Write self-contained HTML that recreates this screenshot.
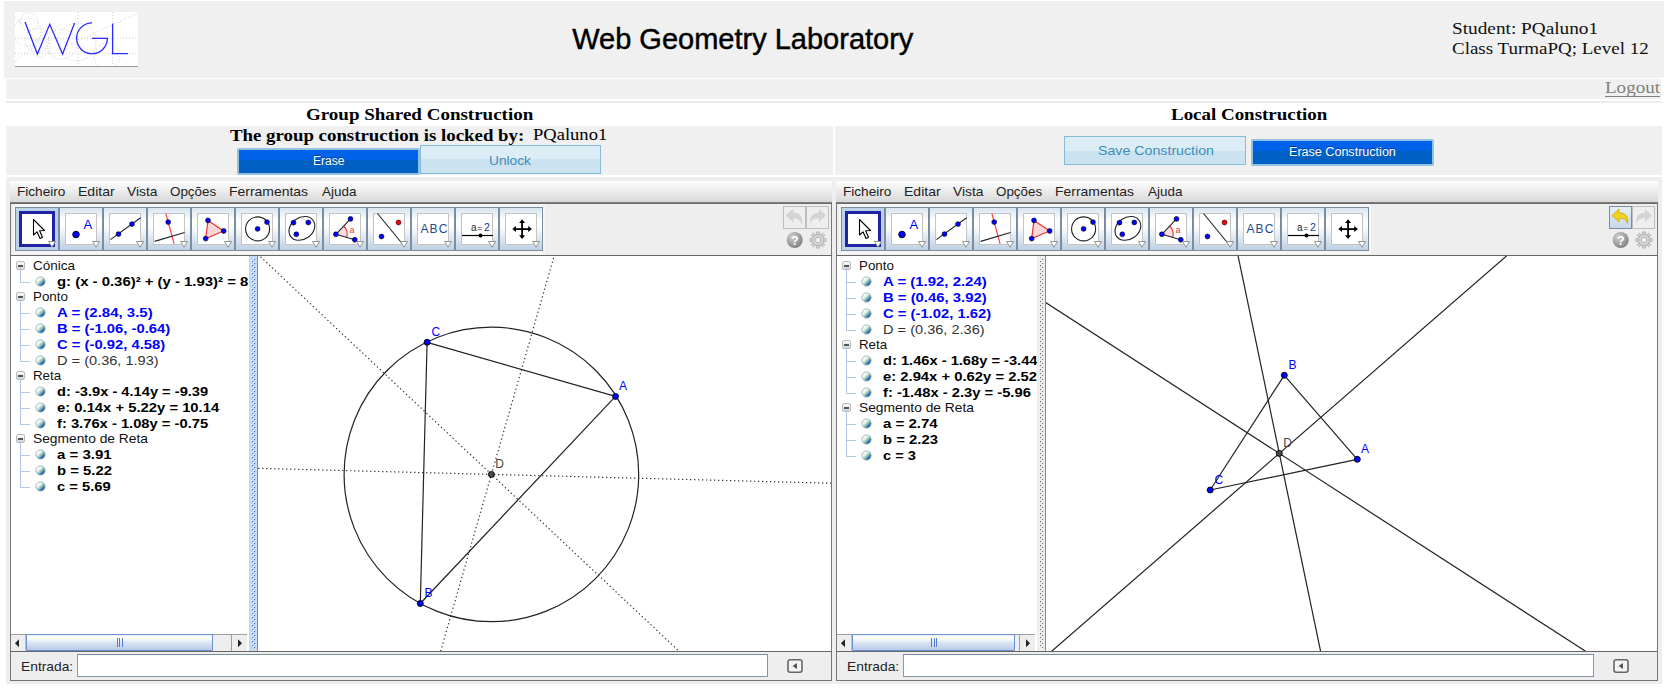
<!DOCTYPE html><html><head><meta charset="utf-8"><style>
html,body{margin:0;padding:0;}
body{width:1669px;height:693px;position:relative;overflow:hidden;background:#fff;}
.t{position:absolute;white-space:nowrap;line-height:0;}
.r{position:absolute;box-sizing:border-box;}
svg{position:absolute;overflow:hidden;}
</style></head><body>
<div class="r" style="left:4px;top:1px;width:1660px;height:77px;background:#f0f0f0"></div>
<svg style="left:15px;top:12px" width="123" height="55" viewBox="0 0 123 55">
<rect x="0" y="0" width="123" height="55" fill="#fff"/>
<g stroke="#777" stroke-width="0.6" fill="none" stroke-dasharray="0.8 2.2" opacity="0.75">
<circle cx="12" cy="20" r="14"/><circle cx="22" cy="28" r="12"/><circle cx="14" cy="10" r="9"/><circle cx="26" cy="36" r="9"/>
<circle cx="47" cy="32" r="15"/><circle cx="92" cy="44" r="13"/><circle cx="62" cy="30" r="19"/>
<line x1="0" y1="5" x2="40" y2="48"/><line x1="0" y1="50" x2="45" y2="12"/><line x1="56" y1="32" x2="123" y2="1"/>
<line x1="0" y1="26.3" x2="123" y2="26.3"/><line x1="0" y1="41.3" x2="123" y2="41.3"/>
<line x1="62.9" y1="0" x2="62.9" y2="55"/><line x1="97.6" y1="0" x2="97.6" y2="55"/>
</g>
<line x1="0" y1="54.5" x2="123" y2="54.5" stroke="#999" stroke-width="1"/>
<g stroke="#2a2aff" stroke-width="1.3" fill="none">
<polyline points="10,10.1 22.4,42 34.7,12.3 47.6,42 59.6,10.9"/>
<path d="M77,10.9 A15.4 15.4 0 1 0 92.4,26.3 L77,26.3"/>
<polyline points="97.6,11.6 97.6,41.6 112.9,41.6"/>
</g>
</svg>
<div class="t" style="left:572.20px;top:38.95px;font:29px/0 'Liberation Sans', sans-serif;color:#000;-webkit-text-stroke:0.45px #000;">Web Geometry Laboratory</div>
<div class="t" style="left:1452.20px;top:28.73px;font:16.5px/0 'Liberation Serif', serif;color:#111;transform:scaleX(1.1678);transform-origin:0 0;">Student: PQaluno1</div>
<div class="t" style="left:1452.20px;top:49.43px;font:16.5px/0 'Liberation Serif', serif;color:#111;transform:scaleX(1.1503);transform-origin:0 0;">Class TurmaPQ; Level 12</div>
<div class="r" style="left:6px;top:79px;width:1655px;height:20px;background:#f0f0f0"></div>
<div class="t" style="left:1605.00px;top:87.93px;font:16.5px/0 'Liberation Serif', serif;color:#808080;transform:scaleX(1.1530);transform-origin:0 0;">Logout</div>
<div class="r" style="left:1605px;top:96px;width:55px;height:1px;background:#808080"></div>
<div class="r" style="left:6px;top:101px;width:1656px;height:2px;background:#ececec"></div>
<div class="t" style="left:306.40px;top:114.60px;font:bold 16px/0 'Liberation Serif', serif;color:#000;transform:scaleX(1.1870);transform-origin:0 0;">Group Shared Construction</div>
<div class="t" style="left:1170.70px;top:114.60px;font:bold 16px/0 'Liberation Serif', serif;color:#000;transform:scaleX(1.1833);transform-origin:0 0;">Local Construction</div>
<div class="r" style="left:6px;top:126px;width:827px;height:49px;background:#f0f0f0"></div>
<div class="r" style="left:835px;top:126px;width:827px;height:49px;background:#f0f0f0"></div>
<div class="t" style="left:230.00px;top:135.60px;font:bold 16px/0 'Liberation Serif', serif;color:#000;transform:scaleX(1.1772);transform-origin:0 0;">The group construction is locked by:</div>
<div class="t" style="left:532.90px;top:135.43px;font:16.5px/0 'Liberation Serif', serif;color:#000;transform:scaleX(1.1242);transform-origin:0 0;">PQaluno1</div>
<div class="r" style="left:237px;top:148px;width:183px;height:27px;border:2px solid #93c2de;border-radius:2px;background:linear-gradient(#0062e8 0,#0062e8 42%,#0060c4 42%,#0060c4 100%);background-clip:padding-box"></div>
<div class="t" style="left:312.90px;top:161.04px;font:12px/0 'Liberation Sans', sans-serif;color:#fff;transform:scaleX(1.0032);transform-origin:0 0;text-shadow:0 -1px 0 rgba(0,0,0,.35);">Erase</div>
<div class="r" style="left:420px;top:145px;width:181px;height:29px;border:1px solid #86bcd8;background:linear-gradient(#ddedf6 0,#ddedf6 50%,#cbe3f0 50%,#cbe3f0 100%);background-clip:padding-box"></div>
<div class="t" style="left:489.30px;top:160.52px;font:13.5px/0 'Liberation Sans', sans-serif;color:#3f8cb8;transform:scaleX(1.0169);transform-origin:0 0;">Unlock</div>
<div class="r" style="left:1064px;top:136px;width:182px;height:29px;border:1px solid #86bcd8;background:linear-gradient(#ddedf6 0,#ddedf6 50%,#cbe3f0 50%,#cbe3f0 100%);background-clip:padding-box"></div>
<div class="t" style="left:1097.60px;top:151.32px;font:13.5px/0 'Liberation Sans', sans-serif;color:#3f8cb8;transform:scaleX(1.0517);transform-origin:0 0;">Save Construction</div>
<div class="r" style="left:1251px;top:139px;width:183px;height:27px;border:2px solid #93c2de;border-radius:2px;background:linear-gradient(#0062e8 0,#0062e8 42%,#0060c4 42%,#0060c4 100%);background-clip:padding-box"></div>
<div class="t" style="left:1288.60px;top:152.14px;font:12px/0 'Liberation Sans', sans-serif;color:#fff;transform:scaleX(1.0471);transform-origin:0 0;text-shadow:0 -1px 0 rgba(0,0,0,.35);">Erase Construction</div>
<div class="r" style="left:6px;top:177px;width:1656px;height:507px;background:#eeeeee"></div>
<div class="r" style="left:10px;top:181px;width:822px;height:21px;background:linear-gradient(#fefefe,#d8d8d8)"></div>
<div class="r" style="left:10px;top:202px;width:822px;height:2px;background:linear-gradient(#8a8a8a,#5e5e5e)"></div>
<div class="t" style="left:17.00px;top:191.90px;font:13px/0 'Liberation Sans', sans-serif;color:#222;transform:scaleX(1.0455);transform-origin:0 0;">Ficheiro</div>
<div class="t" style="left:78.30px;top:191.90px;font:13px/0 'Liberation Sans', sans-serif;color:#222;transform:scaleX(1.0794);transform-origin:0 0;">Editar</div>
<div class="t" style="left:126.90px;top:191.90px;font:13px/0 'Liberation Sans', sans-serif;color:#222;transform:scaleX(1.0627);transform-origin:0 0;">Vista</div>
<div class="t" style="left:170.30px;top:191.90px;font:13px/0 'Liberation Sans', sans-serif;color:#222;transform:scaleX(1.0290);transform-origin:0 0;">Opções</div>
<div class="t" style="left:229.30px;top:191.90px;font:13px/0 'Liberation Sans', sans-serif;color:#222;transform:scaleX(1.0719);transform-origin:0 0;">Ferramentas</div>
<div class="t" style="left:322.00px;top:191.90px;font:13px/0 'Liberation Sans', sans-serif;color:#222;transform:scaleX(1.0330);transform-origin:0 0;">Ajuda</div>
<div class="r" style="left:10px;top:204px;width:822px;height:52px;background:#eeeeee;border-left:1px solid #777;border-right:1px solid #777"></div>
<div class="r" style="left:13px;top:204px;width:532px;height:50px;background:#f6f6f6"></div>
<div class="r" style="left:10px;top:255px;width:822px;height:1px;background:#666"></div>
<div class="r" style="left:15px;top:207px;width:44px;height:44px;background:#bcd2e6;border:1px solid #7a8ea0"></div>
<div class="r" style="left:19px;top:211px;width:36px;height:36px;background:#fff;border:3px solid #2222a8"></div>
<svg style="left:21px;top:213px" width="32" height="32" viewBox="0 0 32 32"><path d="M12.5,6.5 L12.5,22 L16,18.8 L19,25.5 L21.5,24.3 L18.6,17.8 L23.5,17.5 Z" fill="#fff" stroke="#000" stroke-width="1.1" stroke-linejoin="round"/></svg>
<svg style="left:48px;top:241px" width="8" height="7" viewBox="0 0 8 7"><polygon points="0.5,0.5 7.5,0.5 4,6.2" fill="#fff" stroke="#888" stroke-width="0.9"/></svg>
<div class="r" style="left:59px;top:207px;width:44px;height:44px;background:linear-gradient(#d8e4ef 0%,#ffffff 30%,#ffffff 42%,#bdd0e2 100%);border:1px solid #7a8ea0"></div>
<div class="r" style="left:65px;top:213px;width:32px;height:32px;background:#fff;border:1px solid #c4c4c4"></div>
<svg style="left:66px;top:213px" width="32" height="32" viewBox="0 0 32 32"><circle cx="10" cy="21.5" r="3.3" fill="#0000ff" stroke="#000" stroke-width="0.9"/><text x="17.5" y="15.5" font-family="Liberation Sans" font-size="13" fill="#0000ff">A</text></svg>
<svg style="left:92px;top:241px" width="8" height="7" viewBox="0 0 8 7"><polygon points="0.5,0.5 7.5,0.5 4,6.2" fill="#fff" stroke="#888" stroke-width="0.9"/></svg>
<div class="r" style="left:103px;top:207px;width:44px;height:44px;background:linear-gradient(#d8e4ef 0%,#ffffff 30%,#ffffff 42%,#bdd0e2 100%);border:1px solid #7a8ea0"></div>
<div class="r" style="left:109px;top:213px;width:32px;height:32px;background:#fff;border:1px solid #c4c4c4"></div>
<svg style="left:110px;top:213px" width="32" height="32" viewBox="0 0 32 32"><line x1="0.4" y1="26.6" x2="30.6" y2="4.7" stroke="#222" stroke-width="1.1"/><circle cx="8.5" cy="21.1" r="2.45" fill="#0000ff" stroke="#000" stroke-width="0.6"/><circle cx="22" cy="11.1" r="2.45" fill="#0000ff" stroke="#000" stroke-width="0.6"/></svg>
<svg style="left:136px;top:241px" width="8" height="7" viewBox="0 0 8 7"><polygon points="0.5,0.5 7.5,0.5 4,6.2" fill="#fff" stroke="#888" stroke-width="0.9"/></svg>
<div class="r" style="left:147px;top:207px;width:44px;height:44px;background:linear-gradient(#d8e4ef 0%,#ffffff 30%,#ffffff 42%,#bdd0e2 100%);border:1px solid #7a8ea0"></div>
<div class="r" style="left:153px;top:213px;width:32px;height:32px;background:#fff;border:1px solid #c4c4c4"></div>
<svg style="left:154px;top:213px" width="32" height="32" viewBox="0 0 32 32"><line x1="11.8" y1="0.4" x2="20.1" y2="30.9" stroke="#f33" stroke-width="1.1"/><line x1="0.6" y1="28.4" x2="30.6" y2="19.5" stroke="#222" stroke-width="1.1"/><circle cx="14.2" cy="9.1" r="2.45" fill="#0000ff" stroke="#000" stroke-width="0.6"/></svg>
<svg style="left:180px;top:241px" width="8" height="7" viewBox="0 0 8 7"><polygon points="0.5,0.5 7.5,0.5 4,6.2" fill="#fff" stroke="#888" stroke-width="0.9"/></svg>
<div class="r" style="left:191px;top:207px;width:44px;height:44px;background:linear-gradient(#d8e4ef 0%,#ffffff 30%,#ffffff 42%,#bdd0e2 100%);border:1px solid #7a8ea0"></div>
<div class="r" style="left:197px;top:213px;width:32px;height:32px;background:#fff;border:1px solid #c4c4c4"></div>
<svg style="left:198px;top:213px" width="32" height="32" viewBox="0 0 32 32"><polygon points="10,7.4 25.7,18 7.7,25.6" fill="#f6d6d6" stroke="#e33" stroke-width="1.2"/><circle cx="10" cy="7.4" r="2.45" fill="#0000ff" stroke="#000" stroke-width="0.6"/><circle cx="25.7" cy="18" r="2.45" fill="#0000ff" stroke="#000" stroke-width="0.6"/><circle cx="7.7" cy="25.6" r="2.45" fill="#0000ff" stroke="#000" stroke-width="0.6"/></svg>
<svg style="left:224px;top:241px" width="8" height="7" viewBox="0 0 8 7"><polygon points="0.5,0.5 7.5,0.5 4,6.2" fill="#fff" stroke="#888" stroke-width="0.9"/></svg>
<div class="r" style="left:235px;top:207px;width:44px;height:44px;background:linear-gradient(#d8e4ef 0%,#ffffff 30%,#ffffff 42%,#bdd0e2 100%);border:1px solid #7a8ea0"></div>
<div class="r" style="left:241px;top:213px;width:32px;height:32px;background:#fff;border:1px solid #c4c4c4"></div>
<svg style="left:242px;top:213px" width="32" height="32" viewBox="0 0 32 32"><circle cx="15.6" cy="15.9" r="12" fill="none" stroke="#222" stroke-width="1.1"/><circle cx="15.6" cy="15.9" r="2.45" fill="#0000ff" stroke="#000" stroke-width="0.6"/><circle cx="25" cy="9.1" r="2.45" fill="#0000ff" stroke="#000" stroke-width="0.6"/></svg>
<svg style="left:268px;top:241px" width="8" height="7" viewBox="0 0 8 7"><polygon points="0.5,0.5 7.5,0.5 4,6.2" fill="#fff" stroke="#888" stroke-width="0.9"/></svg>
<div class="r" style="left:279px;top:207px;width:44px;height:44px;background:linear-gradient(#d8e4ef 0%,#ffffff 30%,#ffffff 42%,#bdd0e2 100%);border:1px solid #7a8ea0"></div>
<div class="r" style="left:285px;top:213px;width:32px;height:32px;background:#fff;border:1px solid #c4c4c4"></div>
<svg style="left:286px;top:213px" width="32" height="32" viewBox="0 0 32 32"><ellipse cx="15.9" cy="15.4" rx="13.8" ry="10.8" transform="rotate(-35 15.9 15.4)" fill="none" stroke="#222" stroke-width="1.1"/><circle cx="7.5" cy="9.7" r="2.45" fill="#0000ff" stroke="#000" stroke-width="0.6"/><circle cx="22.3" cy="9.5" r="2.45" fill="#0000ff" stroke="#000" stroke-width="0.6"/><circle cx="10.3" cy="21.3" r="2.45" fill="#0000ff" stroke="#000" stroke-width="0.6"/></svg>
<svg style="left:312px;top:241px" width="8" height="7" viewBox="0 0 8 7"><polygon points="0.5,0.5 7.5,0.5 4,6.2" fill="#fff" stroke="#888" stroke-width="0.9"/></svg>
<div class="r" style="left:323px;top:207px;width:44px;height:44px;background:linear-gradient(#d8e4ef 0%,#ffffff 30%,#ffffff 42%,#bdd0e2 100%);border:1px solid #7a8ea0"></div>
<div class="r" style="left:329px;top:213px;width:32px;height:32px;background:#fff;border:1px solid #c4c4c4"></div>
<svg style="left:330px;top:213px" width="32" height="32" viewBox="0 0 32 32"><path d="M5.9,21.3 L14,13.5 A11,11 0 0 1 16.8,24.2 Z" fill="#f8dede"/><path d="M14,13.5 A11,11 0 0 1 16.8,24.2" fill="none" stroke="#e33" stroke-width="1.1"/><line x1="5.9" y1="21.3" x2="20.5" y2="5.9" stroke="#222" stroke-width="1.1"/><line x1="5.9" y1="21.3" x2="24.8" y2="26.8" stroke="#222" stroke-width="1.1"/><text x="19.5" y="19.5" font-family="Liberation Sans" font-size="9" fill="#e33">a</text><circle cx="5.9" cy="21.3" r="2.45" fill="#0000ff" stroke="#000" stroke-width="0.6"/><circle cx="20.5" cy="5.9" r="2.45" fill="#0000ff" stroke="#000" stroke-width="0.6"/><circle cx="24.8" cy="26.8" r="2.45" fill="#0000ff" stroke="#000" stroke-width="0.6"/></svg>
<svg style="left:356px;top:241px" width="8" height="7" viewBox="0 0 8 7"><polygon points="0.5,0.5 7.5,0.5 4,6.2" fill="#fff" stroke="#888" stroke-width="0.9"/></svg>
<div class="r" style="left:367px;top:207px;width:44px;height:44px;background:linear-gradient(#d8e4ef 0%,#ffffff 30%,#ffffff 42%,#bdd0e2 100%);border:1px solid #7a8ea0"></div>
<div class="r" style="left:373px;top:213px;width:32px;height:32px;background:#fff;border:1px solid #c4c4c4"></div>
<svg style="left:374px;top:213px" width="32" height="32" viewBox="0 0 32 32"><line x1="3.5" y1="0.5" x2="28.5" y2="31" stroke="#222" stroke-width="1.1"/><circle cx="7.5" cy="23.5" r="2.45" fill="#0000ff" stroke="#000" stroke-width="0.6"/><circle cx="24.5" cy="9.5" r="2.45" fill="#ff0000" stroke="#000" stroke-width="0.6"/></svg>
<svg style="left:400px;top:241px" width="8" height="7" viewBox="0 0 8 7"><polygon points="0.5,0.5 7.5,0.5 4,6.2" fill="#fff" stroke="#888" stroke-width="0.9"/></svg>
<div class="r" style="left:411px;top:207px;width:44px;height:44px;background:linear-gradient(#d8e4ef 0%,#ffffff 30%,#ffffff 42%,#bdd0e2 100%);border:1px solid #7a8ea0"></div>
<div class="r" style="left:417px;top:213px;width:32px;height:32px;background:#fff;border:1px solid #c4c4c4"></div>
<svg style="left:418px;top:213px" width="32" height="32" viewBox="0 0 32 32"><text x="2.5" y="20" font-family="Liberation Sans" font-size="12" fill="#1c4a8c" letter-spacing="1.1">ABC</text></svg>
<svg style="left:444px;top:241px" width="8" height="7" viewBox="0 0 8 7"><polygon points="0.5,0.5 7.5,0.5 4,6.2" fill="#fff" stroke="#888" stroke-width="0.9"/></svg>
<div class="r" style="left:455px;top:207px;width:44px;height:44px;background:linear-gradient(#d8e4ef 0%,#ffffff 30%,#ffffff 42%,#bdd0e2 100%);border:1px solid #7a8ea0"></div>
<div class="r" style="left:461px;top:213px;width:32px;height:32px;background:#fff;border:1px solid #c4c4c4"></div>
<svg style="left:462px;top:213px" width="32" height="32" viewBox="0 0 32 32"><text x="9" y="18" font-family="Liberation Sans" font-size="10" fill="#222">a</text><text x="15.5" y="17.5" font-family="Liberation Sans" font-size="8" fill="#222">=</text><text x="22" y="18" font-family="Liberation Sans" font-size="10.5" fill="#0a3a9a">2</text><line x1="0" y1="22.5" x2="31" y2="22.5" stroke="#000" stroke-width="1.2"/><circle cx="18.5" cy="22.5" r="2" fill="#000"/></svg>
<svg style="left:488px;top:241px" width="8" height="7" viewBox="0 0 8 7"><polygon points="0.5,0.5 7.5,0.5 4,6.2" fill="#fff" stroke="#888" stroke-width="0.9"/></svg>
<div class="r" style="left:499px;top:207px;width:44px;height:44px;background:linear-gradient(#d8e4ef 0%,#ffffff 30%,#ffffff 42%,#bdd0e2 100%);border:1px solid #7a8ea0"></div>
<div class="r" style="left:505px;top:213px;width:32px;height:32px;background:#fff;border:1px solid #c4c4c4"></div>
<svg style="left:506px;top:213px" width="32" height="32" viewBox="0 0 32 32"><g fill="#000"><rect x="15.2" y="9" width="1.8" height="14"/><rect x="9" y="15.2" width="14" height="1.8"/><polygon points="16.1,6.3 13.1,10 19.1,10"/><polygon points="16.1,25.9 13.1,22.2 19.1,22.2"/><polygon points="6.3,16.1 10,13.1 10,19.1"/><polygon points="25.9,16.1 22.2,13.1 22.2,19.1"/></g></svg>
<svg style="left:532px;top:241px" width="8" height="7" viewBox="0 0 8 7"><polygon points="0.5,0.5 7.5,0.5 4,6.2" fill="#fff" stroke="#888" stroke-width="0.9"/></svg>
<div class="r" style="left:783px;top:206px;width:23px;height:23px;border:1px solid #bdbdbd"></div>
<div class="r" style="left:806px;top:206px;width:23px;height:23px;border:1px solid #bdbdbd"></div>
<svg style="left:783px;top:206px" width="23" height="23" viewBox="0 0 23 23"><path d="M3,9.5 L10,3 L10,6.8 C16,6.8 19.5,10 18.5,17.5 C17,13 14.5,12.2 10,12.2 L10,16 Z" fill="#d4d4d4" stroke="#d4d4d4" stroke-width="0.7"/></svg>
<svg style="left:806px;top:206px" width="23" height="23" viewBox="0 0 23 23"><path d="M20,9.5 L13,3 L13,6.8 C7,6.8 3.5,10 4.5,17.5 C6,13 8.5,12.2 13,12.2 L13,16 Z" fill="#d4d4d4"/></svg>
<svg style="left:786px;top:231px" width="18" height="18" viewBox="0 0 18 18"><defs><radialGradient id="hg10" cx="0.35" cy="0.3" r="0.8"><stop offset="0" stop-color="#d0d0d0"/><stop offset="1" stop-color="#7a7a7a"/></radialGradient></defs><circle cx="8.7" cy="9" r="8" fill="url(#hg10)"/><text x="8.7" y="13.5" text-anchor="middle" font-family="Liberation Sans" font-weight="bold" font-size="12.5" fill="#fff">?</text></svg>
<svg style="left:809px;top:231px" width="18" height="18" viewBox="0 0 18 18"><rect x="7.4" y="0.8" width="3.2" height="4.2" rx="0.6" fill="#d2d2d2" stroke="#a4a4a4" stroke-width="0.6" transform="rotate(0 9 9)"/><rect x="7.4" y="0.8" width="3.2" height="4.2" rx="0.6" fill="#d2d2d2" stroke="#a4a4a4" stroke-width="0.6" transform="rotate(45 9 9)"/><rect x="7.4" y="0.8" width="3.2" height="4.2" rx="0.6" fill="#d2d2d2" stroke="#a4a4a4" stroke-width="0.6" transform="rotate(90 9 9)"/><rect x="7.4" y="0.8" width="3.2" height="4.2" rx="0.6" fill="#d2d2d2" stroke="#a4a4a4" stroke-width="0.6" transform="rotate(135 9 9)"/><rect x="7.4" y="0.8" width="3.2" height="4.2" rx="0.6" fill="#d2d2d2" stroke="#a4a4a4" stroke-width="0.6" transform="rotate(180 9 9)"/><rect x="7.4" y="0.8" width="3.2" height="4.2" rx="0.6" fill="#d2d2d2" stroke="#a4a4a4" stroke-width="0.6" transform="rotate(225 9 9)"/><rect x="7.4" y="0.8" width="3.2" height="4.2" rx="0.6" fill="#d2d2d2" stroke="#a4a4a4" stroke-width="0.6" transform="rotate(270 9 9)"/><rect x="7.4" y="0.8" width="3.2" height="4.2" rx="0.6" fill="#d2d2d2" stroke="#a4a4a4" stroke-width="0.6" transform="rotate(315 9 9)"/><circle cx="9" cy="9" r="5.8" fill="#d2d2d2" stroke="#a4a4a4" stroke-width="0.6"/><rect x="6.5" y="0.5" width="5" height="17" fill="none"/><circle cx="9" cy="9" r="2.6" fill="#f2f2f2" stroke="#a0a0a0" stroke-width="0.6"/></svg>
<div class="r" style="left:10px;top:256px;width:822px;height:395px;background:#fff;border-left:1px solid #777;border-right:1px solid #777"></div>
<div class="r" style="left:16px;top:261.0px;width:9px;height:9px;border:1px solid #bbb;border-radius:2px;background:linear-gradient(#fafafa,#d6d6d6)"></div>
<div class="r" style="left:18px;top:265.0px;width:5px;height:1.6px;background:#555"></div>
<div class="t" style="left:33.20px;top:265.80px;font:13px/0 'Liberation Sans', sans-serif;color:#111;transform:scaleX(1.0376);transform-origin:0 0;">Cónica</div>
<div class="r" style="left:20px;top:268px;width:1px;height:13.5px;background:#b0c8e4"></div>
<div class="r" style="left:20px;top:281.5px;width:10px;height:1px;background:#b0c8e4"></div>
<svg style="left:35px;top:276.0px" width="11" height="11" viewBox="0 0 11 11"><defs><linearGradient id="bl" x1="0.15" y1="0.15" x2="0.85" y2="0.85"><stop offset="0" stop-color="#ffffff"/><stop offset="0.3" stop-color="#f0f6ee"/><stop offset="0.5" stop-color="#b6d4b4"/><stop offset="0.72" stop-color="#4d93c4"/><stop offset="1" stop-color="#1c3e78"/></linearGradient></defs><circle cx="5.5" cy="5.5" r="4.6" fill="url(#bl)" stroke="#7fa8b8" stroke-width="0.8"/></svg>
<div class="t" style="left:57.30px;top:282.20px;font:bold 13px/0 'Liberation Sans', sans-serif;color:#000;transform:scaleX(1.1461);transform-origin:0 0;">g: (x - 0.36)² + (y - 1.93)² = 8</div>
<div class="r" style="left:16px;top:292.0px;width:9px;height:9px;border:1px solid #bbb;border-radius:2px;background:linear-gradient(#fafafa,#d6d6d6)"></div>
<div class="r" style="left:18px;top:296.0px;width:5px;height:1.6px;background:#555"></div>
<div class="t" style="left:33.20px;top:296.80px;font:13px/0 'Liberation Sans', sans-serif;color:#111;transform:scaleX(1.0289);transform-origin:0 0;">Ponto</div>
<div class="r" style="left:20px;top:299px;width:1px;height:19px;background:#b0c8e4"></div>
<div class="r" style="left:20px;top:312.5px;width:10px;height:1px;background:#b0c8e4"></div>
<svg style="left:35px;top:307.0px" width="11" height="11" viewBox="0 0 11 11"><defs><linearGradient id="bl" x1="0.15" y1="0.15" x2="0.85" y2="0.85"><stop offset="0" stop-color="#ffffff"/><stop offset="0.3" stop-color="#f0f6ee"/><stop offset="0.5" stop-color="#b6d4b4"/><stop offset="0.72" stop-color="#4d93c4"/><stop offset="1" stop-color="#1c3e78"/></linearGradient></defs><circle cx="5.5" cy="5.5" r="4.6" fill="url(#bl)" stroke="#7fa8b8" stroke-width="0.8"/></svg>
<div class="t" style="left:57.30px;top:313.20px;font:bold 13px/0 'Liberation Sans', sans-serif;color:#0000ff;transform:scaleX(1.1524);transform-origin:0 0;">A = (2.84, 3.5)</div>
<div class="r" style="left:20px;top:315px;width:1px;height:19px;background:#b0c8e4"></div>
<div class="r" style="left:20px;top:328.5px;width:10px;height:1px;background:#b0c8e4"></div>
<svg style="left:35px;top:323.0px" width="11" height="11" viewBox="0 0 11 11"><defs><linearGradient id="bl" x1="0.15" y1="0.15" x2="0.85" y2="0.85"><stop offset="0" stop-color="#ffffff"/><stop offset="0.3" stop-color="#f0f6ee"/><stop offset="0.5" stop-color="#b6d4b4"/><stop offset="0.72" stop-color="#4d93c4"/><stop offset="1" stop-color="#1c3e78"/></linearGradient></defs><circle cx="5.5" cy="5.5" r="4.6" fill="url(#bl)" stroke="#7fa8b8" stroke-width="0.8"/></svg>
<div class="t" style="left:57.30px;top:329.20px;font:bold 13px/0 'Liberation Sans', sans-serif;color:#0000ff;transform:scaleX(1.1394);transform-origin:0 0;">B = (-1.06, -0.64)</div>
<div class="r" style="left:20px;top:331px;width:1px;height:19px;background:#b0c8e4"></div>
<div class="r" style="left:20px;top:344.5px;width:10px;height:1px;background:#b0c8e4"></div>
<svg style="left:35px;top:339.0px" width="11" height="11" viewBox="0 0 11 11"><defs><linearGradient id="bl" x1="0.15" y1="0.15" x2="0.85" y2="0.85"><stop offset="0" stop-color="#ffffff"/><stop offset="0.3" stop-color="#f0f6ee"/><stop offset="0.5" stop-color="#b6d4b4"/><stop offset="0.72" stop-color="#4d93c4"/><stop offset="1" stop-color="#1c3e78"/></linearGradient></defs><circle cx="5.5" cy="5.5" r="4.6" fill="url(#bl)" stroke="#7fa8b8" stroke-width="0.8"/></svg>
<div class="t" style="left:57.30px;top:345.20px;font:bold 13px/0 'Liberation Sans', sans-serif;color:#0000ff;transform:scaleX(1.1379);transform-origin:0 0;">C = (-0.92, 4.58)</div>
<div class="r" style="left:20px;top:347px;width:1px;height:13.5px;background:#b0c8e4"></div>
<div class="r" style="left:20px;top:360.5px;width:10px;height:1px;background:#b0c8e4"></div>
<svg style="left:35px;top:355.0px" width="11" height="11" viewBox="0 0 11 11"><defs><linearGradient id="bl" x1="0.15" y1="0.15" x2="0.85" y2="0.85"><stop offset="0" stop-color="#ffffff"/><stop offset="0.3" stop-color="#f0f6ee"/><stop offset="0.5" stop-color="#b6d4b4"/><stop offset="0.72" stop-color="#4d93c4"/><stop offset="1" stop-color="#1c3e78"/></linearGradient></defs><circle cx="5.5" cy="5.5" r="4.6" fill="url(#bl)" stroke="#7fa8b8" stroke-width="0.8"/></svg>
<div class="t" style="left:57.30px;top:361.20px;font:13px/0 'Liberation Sans', sans-serif;color:#333;transform:scaleX(1.1210);transform-origin:0 0;">D = (0.36, 1.93)</div>
<div class="r" style="left:16px;top:371.0px;width:9px;height:9px;border:1px solid #bbb;border-radius:2px;background:linear-gradient(#fafafa,#d6d6d6)"></div>
<div class="r" style="left:18px;top:375.0px;width:5px;height:1.6px;background:#555"></div>
<div class="t" style="left:33.20px;top:375.80px;font:13px/0 'Liberation Sans', sans-serif;color:#111;transform:scaleX(1.0237);transform-origin:0 0;">Reta</div>
<div class="r" style="left:20px;top:378px;width:1px;height:19px;background:#b0c8e4"></div>
<div class="r" style="left:20px;top:391.5px;width:10px;height:1px;background:#b0c8e4"></div>
<svg style="left:35px;top:386.0px" width="11" height="11" viewBox="0 0 11 11"><defs><linearGradient id="bl" x1="0.15" y1="0.15" x2="0.85" y2="0.85"><stop offset="0" stop-color="#ffffff"/><stop offset="0.3" stop-color="#f0f6ee"/><stop offset="0.5" stop-color="#b6d4b4"/><stop offset="0.72" stop-color="#4d93c4"/><stop offset="1" stop-color="#1c3e78"/></linearGradient></defs><circle cx="5.5" cy="5.5" r="4.6" fill="url(#bl)" stroke="#7fa8b8" stroke-width="0.8"/></svg>
<div class="t" style="left:57.30px;top:392.20px;font:bold 13px/0 'Liberation Sans', sans-serif;color:#000;transform:scaleX(1.1277);transform-origin:0 0;">d: -3.9x - 4.14y = -9.39</div>
<div class="r" style="left:20px;top:394px;width:1px;height:19px;background:#b0c8e4"></div>
<div class="r" style="left:20px;top:407.5px;width:10px;height:1px;background:#b0c8e4"></div>
<svg style="left:35px;top:402.0px" width="11" height="11" viewBox="0 0 11 11"><defs><linearGradient id="bl" x1="0.15" y1="0.15" x2="0.85" y2="0.85"><stop offset="0" stop-color="#ffffff"/><stop offset="0.3" stop-color="#f0f6ee"/><stop offset="0.5" stop-color="#b6d4b4"/><stop offset="0.72" stop-color="#4d93c4"/><stop offset="1" stop-color="#1c3e78"/></linearGradient></defs><circle cx="5.5" cy="5.5" r="4.6" fill="url(#bl)" stroke="#7fa8b8" stroke-width="0.8"/></svg>
<div class="t" style="left:57.30px;top:408.20px;font:bold 13px/0 'Liberation Sans', sans-serif;color:#000;transform:scaleX(1.1390);transform-origin:0 0;">e: 0.14x + 5.22y = 10.14</div>
<div class="r" style="left:20px;top:410px;width:1px;height:13.5px;background:#b0c8e4"></div>
<div class="r" style="left:20px;top:423.5px;width:10px;height:1px;background:#b0c8e4"></div>
<svg style="left:35px;top:418.0px" width="11" height="11" viewBox="0 0 11 11"><defs><linearGradient id="bl" x1="0.15" y1="0.15" x2="0.85" y2="0.85"><stop offset="0" stop-color="#ffffff"/><stop offset="0.3" stop-color="#f0f6ee"/><stop offset="0.5" stop-color="#b6d4b4"/><stop offset="0.72" stop-color="#4d93c4"/><stop offset="1" stop-color="#1c3e78"/></linearGradient></defs><circle cx="5.5" cy="5.5" r="4.6" fill="url(#bl)" stroke="#7fa8b8" stroke-width="0.8"/></svg>
<div class="t" style="left:57.30px;top:424.20px;font:bold 13px/0 'Liberation Sans', sans-serif;color:#000;transform:scaleX(1.1336);transform-origin:0 0;">f: 3.76x - 1.08y = -0.75</div>
<div class="r" style="left:16px;top:434.0px;width:9px;height:9px;border:1px solid #bbb;border-radius:2px;background:linear-gradient(#fafafa,#d6d6d6)"></div>
<div class="r" style="left:18px;top:438.0px;width:5px;height:1.6px;background:#555"></div>
<div class="t" style="left:33.20px;top:438.80px;font:13px/0 'Liberation Sans', sans-serif;color:#111;transform:scaleX(1.0608);transform-origin:0 0;">Segmento de Reta</div>
<div class="r" style="left:20px;top:441px;width:1px;height:19px;background:#b0c8e4"></div>
<div class="r" style="left:20px;top:454.5px;width:10px;height:1px;background:#b0c8e4"></div>
<svg style="left:35px;top:449.0px" width="11" height="11" viewBox="0 0 11 11"><defs><linearGradient id="bl" x1="0.15" y1="0.15" x2="0.85" y2="0.85"><stop offset="0" stop-color="#ffffff"/><stop offset="0.3" stop-color="#f0f6ee"/><stop offset="0.5" stop-color="#b6d4b4"/><stop offset="0.72" stop-color="#4d93c4"/><stop offset="1" stop-color="#1c3e78"/></linearGradient></defs><circle cx="5.5" cy="5.5" r="4.6" fill="url(#bl)" stroke="#7fa8b8" stroke-width="0.8"/></svg>
<div class="t" style="left:57.30px;top:455.20px;font:bold 13px/0 'Liberation Sans', sans-serif;color:#000;transform:scaleX(1.1540);transform-origin:0 0;">a = 3.91</div>
<div class="r" style="left:20px;top:457px;width:1px;height:19px;background:#b0c8e4"></div>
<div class="r" style="left:20px;top:470.5px;width:10px;height:1px;background:#b0c8e4"></div>
<svg style="left:35px;top:465.0px" width="11" height="11" viewBox="0 0 11 11"><defs><linearGradient id="bl" x1="0.15" y1="0.15" x2="0.85" y2="0.85"><stop offset="0" stop-color="#ffffff"/><stop offset="0.3" stop-color="#f0f6ee"/><stop offset="0.5" stop-color="#b6d4b4"/><stop offset="0.72" stop-color="#4d93c4"/><stop offset="1" stop-color="#1c3e78"/></linearGradient></defs><circle cx="5.5" cy="5.5" r="4.6" fill="url(#bl)" stroke="#7fa8b8" stroke-width="0.8"/></svg>
<div class="t" style="left:57.30px;top:471.20px;font:bold 13px/0 'Liberation Sans', sans-serif;color:#000;transform:scaleX(1.1449);transform-origin:0 0;">b = 5.22</div>
<div class="r" style="left:20px;top:473px;width:1px;height:13.5px;background:#b0c8e4"></div>
<div class="r" style="left:20px;top:486.5px;width:10px;height:1px;background:#b0c8e4"></div>
<svg style="left:35px;top:481.0px" width="11" height="11" viewBox="0 0 11 11"><defs><linearGradient id="bl" x1="0.15" y1="0.15" x2="0.85" y2="0.85"><stop offset="0" stop-color="#ffffff"/><stop offset="0.3" stop-color="#f0f6ee"/><stop offset="0.5" stop-color="#b6d4b4"/><stop offset="0.72" stop-color="#4d93c4"/><stop offset="1" stop-color="#1c3e78"/></linearGradient></defs><circle cx="5.5" cy="5.5" r="4.6" fill="url(#bl)" stroke="#7fa8b8" stroke-width="0.8"/></svg>
<div class="t" style="left:57.30px;top:487.20px;font:bold 13px/0 'Liberation Sans', sans-serif;color:#000;transform:scaleX(1.1335);transform-origin:0 0;">c = 5.69</div>
<svg style="left:249px;top:256px" width="9" height="395" viewBox="0 0 9 395"><defs><pattern id="sp10" x="0" y="0" width="8" height="4" patternUnits="userSpaceOnUse"><rect x="2" y="0" width="1" height="1" fill="#ffffff"/><rect x="3" y="1" width="1.2" height="1.2" fill="#5a78c0"/><rect x="4" y="2" width="1" height="1" fill="#ffffff"/><rect x="5" y="3" width="1.2" height="1.2" fill="#5a78c0"/></pattern></defs><rect x="0" y="0" width="8" height="395" fill="#c4daf4"/><rect x="0" y="2" width="8" height="390" fill="url(#sp10)"/><rect x="8" y="0" width="1" height="395" fill="#7d8ea6"/></svg>
<svg style="left:258px;top:256px" width="573" height="395" viewBox="258 256 573 395"><line x1="1946.8" y1="1846.2" x2="-964.0" y2="-897.4" stroke="#333" stroke-width="1.2" stroke-dasharray="1.3 2.7" fill="none"/><line x1="-60.6" y1="2396.7" x2="1043.4" y2="-1447.9" stroke="#333" stroke-width="1.2" stroke-dasharray="1.3 2.7" fill="none"/><line x1="2490.7" y1="526.4" x2="-1507.9" y2="422.4" stroke="#333" stroke-width="1.2" stroke-dasharray="1.3 2.7" fill="none"/><circle cx="491.4" cy="474.4" r="147.3" fill="none" stroke="#222" stroke-width="1.2"/><line x1="615.5" y1="396.4" x2="420.3" y2="603.5" stroke="#222" stroke-width="1.2"/><line x1="420.3" y1="603.5" x2="427.1" y2="342.3" stroke="#222" stroke-width="1.2"/><line x1="427.1" y1="342.3" x2="615.5" y2="396.4" stroke="#222" stroke-width="1.2"/><circle cx="615.5" cy="396.4" r="3" fill="#0000ff" stroke="#000" stroke-width="0.9"/><circle cx="420.3" cy="603.5" r="3" fill="#0000ff" stroke="#000" stroke-width="0.9"/><circle cx="427.1" cy="342.3" r="3" fill="#0000ff" stroke="#000" stroke-width="0.9"/><circle cx="491.4" cy="474.4" r="3" fill="#4a4a4a" stroke="#000" stroke-width="0.9"/><text x="619" y="390" font-family="Liberation Sans" font-size="12" fill="#0000ff">A</text><text x="424.5" y="597" font-family="Liberation Sans" font-size="12" fill="#0000ff">B</text><text x="431.5" y="336" font-family="Liberation Sans" font-size="12" fill="#0000ff">C</text><text x="495.3" y="467.7" font-family="Liberation Sans" font-size="12" fill="#444">D</text></svg>
<div class="r" style="left:11px;top:634px;width:236px;height:17px;background:#eeeeee;border-top:1px solid #a0a0a0"></div>
<div class="r" style="left:11px;top:635px;width:15px;height:16px;background:#eee;border-right:1px solid #c0c0c0"></div>
<svg style="left:11px;top:635px" width="15" height="16" viewBox="0 0 15 16"><polygon points="4,8.3 8,4.3 8,12.3" fill="#222"/></svg>
<div class="r" style="left:231px;top:635px;width:15px;height:16px;background:#eee;border-left:1px solid #a0a0a0"></div>
<svg style="left:231px;top:635px" width="15" height="16" viewBox="0 0 15 16"><polygon points="11,8.3 7,4.3 7,12.3" fill="#222"/></svg>
<div class="r" style="left:26px;top:634px;width:187px;height:17px;background:linear-gradient(#eef3fa 0%,#ffffff 20%,#dbe6f3 50%,#b8cbe6 100%);border:1px solid #6c8fd0;border-radius:1px"></div>
<div class="r" style="left:116.9px;top:638px;width:6px;height:9px;border-left:1px solid #5577cc;border-right:1px solid #5577cc"><div class="r" style="left:1.5px;top:0;width:1px;height:9px;background:#5577cc"></div></div>
<div class="r" style="left:10px;top:651px;width:822px;height:1px;background:#666"></div>
<div class="r" style="left:10px;top:652px;width:822px;height:29px;background:#eeeeee;border-left:1px solid #777;border-right:1px solid #777;border-bottom:1px solid #777"></div>
<div class="t" style="left:21.40px;top:666.50px;font:13px/0 'Liberation Sans', sans-serif;color:#222;transform:scaleX(1.0615);transform-origin:0 0;">Entrada:</div>
<div class="r" style="left:77px;top:654px;width:691px;height:23px;background:#fff;border:1px solid #8296a8;border-top-color:#7a8ea0;border-left-color:#8a9aa8"></div>
<svg style="left:787px;top:659px" width="16" height="14" viewBox="0 0 16 14"><rect x="1" y="0.8" width="14" height="12.4" rx="2.2" fill="#f4f4f4" stroke="#666" stroke-width="1.6"/><polygon points="5.5,7 10,4 10,10" fill="#555"/></svg>
<div class="r" style="left:836px;top:181px;width:822px;height:21px;background:linear-gradient(#fefefe,#d8d8d8)"></div>
<div class="r" style="left:836px;top:202px;width:822px;height:2px;background:linear-gradient(#8a8a8a,#5e5e5e)"></div>
<div class="t" style="left:843.00px;top:191.90px;font:13px/0 'Liberation Sans', sans-serif;color:#222;transform:scaleX(1.0455);transform-origin:0 0;">Ficheiro</div>
<div class="t" style="left:904.30px;top:191.90px;font:13px/0 'Liberation Sans', sans-serif;color:#222;transform:scaleX(1.0794);transform-origin:0 0;">Editar</div>
<div class="t" style="left:952.90px;top:191.90px;font:13px/0 'Liberation Sans', sans-serif;color:#222;transform:scaleX(1.0627);transform-origin:0 0;">Vista</div>
<div class="t" style="left:996.30px;top:191.90px;font:13px/0 'Liberation Sans', sans-serif;color:#222;transform:scaleX(1.0290);transform-origin:0 0;">Opções</div>
<div class="t" style="left:1055.30px;top:191.90px;font:13px/0 'Liberation Sans', sans-serif;color:#222;transform:scaleX(1.0719);transform-origin:0 0;">Ferramentas</div>
<div class="t" style="left:1148.00px;top:191.90px;font:13px/0 'Liberation Sans', sans-serif;color:#222;transform:scaleX(1.0330);transform-origin:0 0;">Ajuda</div>
<div class="r" style="left:836px;top:204px;width:822px;height:52px;background:#eeeeee;border-left:1px solid #777;border-right:1px solid #777"></div>
<div class="r" style="left:839px;top:204px;width:532px;height:50px;background:#f6f6f6"></div>
<div class="r" style="left:836px;top:255px;width:822px;height:1px;background:#666"></div>
<div class="r" style="left:841px;top:207px;width:44px;height:44px;background:#bcd2e6;border:1px solid #7a8ea0"></div>
<div class="r" style="left:845px;top:211px;width:36px;height:36px;background:#fff;border:3px solid #2222a8"></div>
<svg style="left:847px;top:213px" width="32" height="32" viewBox="0 0 32 32"><path d="M12.5,6.5 L12.5,22 L16,18.8 L19,25.5 L21.5,24.3 L18.6,17.8 L23.5,17.5 Z" fill="#fff" stroke="#000" stroke-width="1.1" stroke-linejoin="round"/></svg>
<svg style="left:874px;top:241px" width="8" height="7" viewBox="0 0 8 7"><polygon points="0.5,0.5 7.5,0.5 4,6.2" fill="#fff" stroke="#888" stroke-width="0.9"/></svg>
<div class="r" style="left:885px;top:207px;width:44px;height:44px;background:linear-gradient(#d8e4ef 0%,#ffffff 30%,#ffffff 42%,#bdd0e2 100%);border:1px solid #7a8ea0"></div>
<div class="r" style="left:891px;top:213px;width:32px;height:32px;background:#fff;border:1px solid #c4c4c4"></div>
<svg style="left:892px;top:213px" width="32" height="32" viewBox="0 0 32 32"><circle cx="10" cy="21.5" r="3.3" fill="#0000ff" stroke="#000" stroke-width="0.9"/><text x="17.5" y="15.5" font-family="Liberation Sans" font-size="13" fill="#0000ff">A</text></svg>
<svg style="left:918px;top:241px" width="8" height="7" viewBox="0 0 8 7"><polygon points="0.5,0.5 7.5,0.5 4,6.2" fill="#fff" stroke="#888" stroke-width="0.9"/></svg>
<div class="r" style="left:929px;top:207px;width:44px;height:44px;background:linear-gradient(#d8e4ef 0%,#ffffff 30%,#ffffff 42%,#bdd0e2 100%);border:1px solid #7a8ea0"></div>
<div class="r" style="left:935px;top:213px;width:32px;height:32px;background:#fff;border:1px solid #c4c4c4"></div>
<svg style="left:936px;top:213px" width="32" height="32" viewBox="0 0 32 32"><line x1="0.4" y1="26.6" x2="30.6" y2="4.7" stroke="#222" stroke-width="1.1"/><circle cx="8.5" cy="21.1" r="2.45" fill="#0000ff" stroke="#000" stroke-width="0.6"/><circle cx="22" cy="11.1" r="2.45" fill="#0000ff" stroke="#000" stroke-width="0.6"/></svg>
<svg style="left:962px;top:241px" width="8" height="7" viewBox="0 0 8 7"><polygon points="0.5,0.5 7.5,0.5 4,6.2" fill="#fff" stroke="#888" stroke-width="0.9"/></svg>
<div class="r" style="left:973px;top:207px;width:44px;height:44px;background:linear-gradient(#d8e4ef 0%,#ffffff 30%,#ffffff 42%,#bdd0e2 100%);border:1px solid #7a8ea0"></div>
<div class="r" style="left:979px;top:213px;width:32px;height:32px;background:#fff;border:1px solid #c4c4c4"></div>
<svg style="left:980px;top:213px" width="32" height="32" viewBox="0 0 32 32"><line x1="11.8" y1="0.4" x2="20.1" y2="30.9" stroke="#f33" stroke-width="1.1"/><line x1="0.6" y1="28.4" x2="30.6" y2="19.5" stroke="#222" stroke-width="1.1"/><circle cx="14.2" cy="9.1" r="2.45" fill="#0000ff" stroke="#000" stroke-width="0.6"/></svg>
<svg style="left:1006px;top:241px" width="8" height="7" viewBox="0 0 8 7"><polygon points="0.5,0.5 7.5,0.5 4,6.2" fill="#fff" stroke="#888" stroke-width="0.9"/></svg>
<div class="r" style="left:1017px;top:207px;width:44px;height:44px;background:linear-gradient(#d8e4ef 0%,#ffffff 30%,#ffffff 42%,#bdd0e2 100%);border:1px solid #7a8ea0"></div>
<div class="r" style="left:1023px;top:213px;width:32px;height:32px;background:#fff;border:1px solid #c4c4c4"></div>
<svg style="left:1024px;top:213px" width="32" height="32" viewBox="0 0 32 32"><polygon points="10,7.4 25.7,18 7.7,25.6" fill="#f6d6d6" stroke="#e33" stroke-width="1.2"/><circle cx="10" cy="7.4" r="2.45" fill="#0000ff" stroke="#000" stroke-width="0.6"/><circle cx="25.7" cy="18" r="2.45" fill="#0000ff" stroke="#000" stroke-width="0.6"/><circle cx="7.7" cy="25.6" r="2.45" fill="#0000ff" stroke="#000" stroke-width="0.6"/></svg>
<svg style="left:1050px;top:241px" width="8" height="7" viewBox="0 0 8 7"><polygon points="0.5,0.5 7.5,0.5 4,6.2" fill="#fff" stroke="#888" stroke-width="0.9"/></svg>
<div class="r" style="left:1061px;top:207px;width:44px;height:44px;background:linear-gradient(#d8e4ef 0%,#ffffff 30%,#ffffff 42%,#bdd0e2 100%);border:1px solid #7a8ea0"></div>
<div class="r" style="left:1067px;top:213px;width:32px;height:32px;background:#fff;border:1px solid #c4c4c4"></div>
<svg style="left:1068px;top:213px" width="32" height="32" viewBox="0 0 32 32"><circle cx="15.6" cy="15.9" r="12" fill="none" stroke="#222" stroke-width="1.1"/><circle cx="15.6" cy="15.9" r="2.45" fill="#0000ff" stroke="#000" stroke-width="0.6"/><circle cx="25" cy="9.1" r="2.45" fill="#0000ff" stroke="#000" stroke-width="0.6"/></svg>
<svg style="left:1094px;top:241px" width="8" height="7" viewBox="0 0 8 7"><polygon points="0.5,0.5 7.5,0.5 4,6.2" fill="#fff" stroke="#888" stroke-width="0.9"/></svg>
<div class="r" style="left:1105px;top:207px;width:44px;height:44px;background:linear-gradient(#d8e4ef 0%,#ffffff 30%,#ffffff 42%,#bdd0e2 100%);border:1px solid #7a8ea0"></div>
<div class="r" style="left:1111px;top:213px;width:32px;height:32px;background:#fff;border:1px solid #c4c4c4"></div>
<svg style="left:1112px;top:213px" width="32" height="32" viewBox="0 0 32 32"><ellipse cx="15.9" cy="15.4" rx="13.8" ry="10.8" transform="rotate(-35 15.9 15.4)" fill="none" stroke="#222" stroke-width="1.1"/><circle cx="7.5" cy="9.7" r="2.45" fill="#0000ff" stroke="#000" stroke-width="0.6"/><circle cx="22.3" cy="9.5" r="2.45" fill="#0000ff" stroke="#000" stroke-width="0.6"/><circle cx="10.3" cy="21.3" r="2.45" fill="#0000ff" stroke="#000" stroke-width="0.6"/></svg>
<svg style="left:1138px;top:241px" width="8" height="7" viewBox="0 0 8 7"><polygon points="0.5,0.5 7.5,0.5 4,6.2" fill="#fff" stroke="#888" stroke-width="0.9"/></svg>
<div class="r" style="left:1149px;top:207px;width:44px;height:44px;background:linear-gradient(#d8e4ef 0%,#ffffff 30%,#ffffff 42%,#bdd0e2 100%);border:1px solid #7a8ea0"></div>
<div class="r" style="left:1155px;top:213px;width:32px;height:32px;background:#fff;border:1px solid #c4c4c4"></div>
<svg style="left:1156px;top:213px" width="32" height="32" viewBox="0 0 32 32"><path d="M5.9,21.3 L14,13.5 A11,11 0 0 1 16.8,24.2 Z" fill="#f8dede"/><path d="M14,13.5 A11,11 0 0 1 16.8,24.2" fill="none" stroke="#e33" stroke-width="1.1"/><line x1="5.9" y1="21.3" x2="20.5" y2="5.9" stroke="#222" stroke-width="1.1"/><line x1="5.9" y1="21.3" x2="24.8" y2="26.8" stroke="#222" stroke-width="1.1"/><text x="19.5" y="19.5" font-family="Liberation Sans" font-size="9" fill="#e33">a</text><circle cx="5.9" cy="21.3" r="2.45" fill="#0000ff" stroke="#000" stroke-width="0.6"/><circle cx="20.5" cy="5.9" r="2.45" fill="#0000ff" stroke="#000" stroke-width="0.6"/><circle cx="24.8" cy="26.8" r="2.45" fill="#0000ff" stroke="#000" stroke-width="0.6"/></svg>
<svg style="left:1182px;top:241px" width="8" height="7" viewBox="0 0 8 7"><polygon points="0.5,0.5 7.5,0.5 4,6.2" fill="#fff" stroke="#888" stroke-width="0.9"/></svg>
<div class="r" style="left:1193px;top:207px;width:44px;height:44px;background:linear-gradient(#d8e4ef 0%,#ffffff 30%,#ffffff 42%,#bdd0e2 100%);border:1px solid #7a8ea0"></div>
<div class="r" style="left:1199px;top:213px;width:32px;height:32px;background:#fff;border:1px solid #c4c4c4"></div>
<svg style="left:1200px;top:213px" width="32" height="32" viewBox="0 0 32 32"><line x1="3.5" y1="0.5" x2="28.5" y2="31" stroke="#222" stroke-width="1.1"/><circle cx="7.5" cy="23.5" r="2.45" fill="#0000ff" stroke="#000" stroke-width="0.6"/><circle cx="24.5" cy="9.5" r="2.45" fill="#ff0000" stroke="#000" stroke-width="0.6"/></svg>
<svg style="left:1226px;top:241px" width="8" height="7" viewBox="0 0 8 7"><polygon points="0.5,0.5 7.5,0.5 4,6.2" fill="#fff" stroke="#888" stroke-width="0.9"/></svg>
<div class="r" style="left:1237px;top:207px;width:44px;height:44px;background:linear-gradient(#d8e4ef 0%,#ffffff 30%,#ffffff 42%,#bdd0e2 100%);border:1px solid #7a8ea0"></div>
<div class="r" style="left:1243px;top:213px;width:32px;height:32px;background:#fff;border:1px solid #c4c4c4"></div>
<svg style="left:1244px;top:213px" width="32" height="32" viewBox="0 0 32 32"><text x="2.5" y="20" font-family="Liberation Sans" font-size="12" fill="#1c4a8c" letter-spacing="1.1">ABC</text></svg>
<svg style="left:1270px;top:241px" width="8" height="7" viewBox="0 0 8 7"><polygon points="0.5,0.5 7.5,0.5 4,6.2" fill="#fff" stroke="#888" stroke-width="0.9"/></svg>
<div class="r" style="left:1281px;top:207px;width:44px;height:44px;background:linear-gradient(#d8e4ef 0%,#ffffff 30%,#ffffff 42%,#bdd0e2 100%);border:1px solid #7a8ea0"></div>
<div class="r" style="left:1287px;top:213px;width:32px;height:32px;background:#fff;border:1px solid #c4c4c4"></div>
<svg style="left:1288px;top:213px" width="32" height="32" viewBox="0 0 32 32"><text x="9" y="18" font-family="Liberation Sans" font-size="10" fill="#222">a</text><text x="15.5" y="17.5" font-family="Liberation Sans" font-size="8" fill="#222">=</text><text x="22" y="18" font-family="Liberation Sans" font-size="10.5" fill="#0a3a9a">2</text><line x1="0" y1="22.5" x2="31" y2="22.5" stroke="#000" stroke-width="1.2"/><circle cx="18.5" cy="22.5" r="2" fill="#000"/></svg>
<svg style="left:1314px;top:241px" width="8" height="7" viewBox="0 0 8 7"><polygon points="0.5,0.5 7.5,0.5 4,6.2" fill="#fff" stroke="#888" stroke-width="0.9"/></svg>
<div class="r" style="left:1325px;top:207px;width:44px;height:44px;background:linear-gradient(#d8e4ef 0%,#ffffff 30%,#ffffff 42%,#bdd0e2 100%);border:1px solid #7a8ea0"></div>
<div class="r" style="left:1331px;top:213px;width:32px;height:32px;background:#fff;border:1px solid #c4c4c4"></div>
<svg style="left:1332px;top:213px" width="32" height="32" viewBox="0 0 32 32"><g fill="#000"><rect x="15.2" y="9" width="1.8" height="14"/><rect x="9" y="15.2" width="14" height="1.8"/><polygon points="16.1,6.3 13.1,10 19.1,10"/><polygon points="16.1,25.9 13.1,22.2 19.1,22.2"/><polygon points="6.3,16.1 10,13.1 10,19.1"/><polygon points="25.9,16.1 22.2,13.1 22.2,19.1"/></g></svg>
<svg style="left:1358px;top:241px" width="8" height="7" viewBox="0 0 8 7"><polygon points="0.5,0.5 7.5,0.5 4,6.2" fill="#fff" stroke="#888" stroke-width="0.9"/></svg>
<div class="r" style="left:1609px;top:206px;width:23px;height:23px;background:linear-gradient(#e4eef7,#c6d9ea);border:1px solid #7a8ea0"></div>
<div class="r" style="left:1632px;top:206px;width:23px;height:23px;border:1px solid #bdbdbd"></div>
<svg style="left:1609px;top:206px" width="23" height="23" viewBox="0 0 23 23"><path d="M3,9.5 L10,3 L10,6.8 C16,6.8 19.5,10 18.5,17.5 C17,13 14.5,12.2 10,12.2 L10,16 Z" fill="#f2d21a" stroke="#c8a400" stroke-width="0.7"/></svg>
<svg style="left:1632px;top:206px" width="23" height="23" viewBox="0 0 23 23"><path d="M20,9.5 L13,3 L13,6.8 C7,6.8 3.5,10 4.5,17.5 C6,13 8.5,12.2 13,12.2 L13,16 Z" fill="#d4d4d4"/></svg>
<svg style="left:1612px;top:231px" width="18" height="18" viewBox="0 0 18 18"><defs><radialGradient id="hg836" cx="0.35" cy="0.3" r="0.8"><stop offset="0" stop-color="#d0d0d0"/><stop offset="1" stop-color="#7a7a7a"/></radialGradient></defs><circle cx="8.7" cy="9" r="8" fill="url(#hg836)"/><text x="8.7" y="13.5" text-anchor="middle" font-family="Liberation Sans" font-weight="bold" font-size="12.5" fill="#fff">?</text></svg>
<svg style="left:1635px;top:231px" width="18" height="18" viewBox="0 0 18 18"><rect x="7.4" y="0.8" width="3.2" height="4.2" rx="0.6" fill="#d2d2d2" stroke="#a4a4a4" stroke-width="0.6" transform="rotate(0 9 9)"/><rect x="7.4" y="0.8" width="3.2" height="4.2" rx="0.6" fill="#d2d2d2" stroke="#a4a4a4" stroke-width="0.6" transform="rotate(45 9 9)"/><rect x="7.4" y="0.8" width="3.2" height="4.2" rx="0.6" fill="#d2d2d2" stroke="#a4a4a4" stroke-width="0.6" transform="rotate(90 9 9)"/><rect x="7.4" y="0.8" width="3.2" height="4.2" rx="0.6" fill="#d2d2d2" stroke="#a4a4a4" stroke-width="0.6" transform="rotate(135 9 9)"/><rect x="7.4" y="0.8" width="3.2" height="4.2" rx="0.6" fill="#d2d2d2" stroke="#a4a4a4" stroke-width="0.6" transform="rotate(180 9 9)"/><rect x="7.4" y="0.8" width="3.2" height="4.2" rx="0.6" fill="#d2d2d2" stroke="#a4a4a4" stroke-width="0.6" transform="rotate(225 9 9)"/><rect x="7.4" y="0.8" width="3.2" height="4.2" rx="0.6" fill="#d2d2d2" stroke="#a4a4a4" stroke-width="0.6" transform="rotate(270 9 9)"/><rect x="7.4" y="0.8" width="3.2" height="4.2" rx="0.6" fill="#d2d2d2" stroke="#a4a4a4" stroke-width="0.6" transform="rotate(315 9 9)"/><circle cx="9" cy="9" r="5.8" fill="#d2d2d2" stroke="#a4a4a4" stroke-width="0.6"/><rect x="6.5" y="0.5" width="5" height="17" fill="none"/><circle cx="9" cy="9" r="2.6" fill="#f2f2f2" stroke="#a0a0a0" stroke-width="0.6"/></svg>
<div class="r" style="left:836px;top:256px;width:822px;height:395px;background:#fff;border-left:1px solid #777;border-right:1px solid #777"></div>
<div class="r" style="left:842px;top:261.0px;width:9px;height:9px;border:1px solid #bbb;border-radius:2px;background:linear-gradient(#fafafa,#d6d6d6)"></div>
<div class="r" style="left:844px;top:265.0px;width:5px;height:1.6px;background:#555"></div>
<div class="t" style="left:859.20px;top:265.80px;font:13px/0 'Liberation Sans', sans-serif;color:#111;transform:scaleX(1.0289);transform-origin:0 0;">Ponto</div>
<div class="r" style="left:846px;top:268px;width:1px;height:19px;background:#b0c8e4"></div>
<div class="r" style="left:846px;top:281.5px;width:10px;height:1px;background:#b0c8e4"></div>
<svg style="left:861px;top:276.0px" width="11" height="11" viewBox="0 0 11 11"><defs><linearGradient id="bl" x1="0.15" y1="0.15" x2="0.85" y2="0.85"><stop offset="0" stop-color="#ffffff"/><stop offset="0.3" stop-color="#f0f6ee"/><stop offset="0.5" stop-color="#b6d4b4"/><stop offset="0.72" stop-color="#4d93c4"/><stop offset="1" stop-color="#1c3e78"/></linearGradient></defs><circle cx="5.5" cy="5.5" r="4.6" fill="url(#bl)" stroke="#7fa8b8" stroke-width="0.8"/></svg>
<div class="t" style="left:883.30px;top:282.20px;font:bold 13px/0 'Liberation Sans', sans-serif;color:#0000ff;transform:scaleX(1.1499);transform-origin:0 0;">A = (1.92, 2.24)</div>
<div class="r" style="left:846px;top:284px;width:1px;height:19px;background:#b0c8e4"></div>
<div class="r" style="left:846px;top:297.5px;width:10px;height:1px;background:#b0c8e4"></div>
<svg style="left:861px;top:292.0px" width="11" height="11" viewBox="0 0 11 11"><defs><linearGradient id="bl" x1="0.15" y1="0.15" x2="0.85" y2="0.85"><stop offset="0" stop-color="#ffffff"/><stop offset="0.3" stop-color="#f0f6ee"/><stop offset="0.5" stop-color="#b6d4b4"/><stop offset="0.72" stop-color="#4d93c4"/><stop offset="1" stop-color="#1c3e78"/></linearGradient></defs><circle cx="5.5" cy="5.5" r="4.6" fill="url(#bl)" stroke="#7fa8b8" stroke-width="0.8"/></svg>
<div class="t" style="left:883.30px;top:298.20px;font:bold 13px/0 'Liberation Sans', sans-serif;color:#0000ff;transform:scaleX(1.1425);transform-origin:0 0;">B = (0.46, 3.92)</div>
<div class="r" style="left:846px;top:300px;width:1px;height:19px;background:#b0c8e4"></div>
<div class="r" style="left:846px;top:313.5px;width:10px;height:1px;background:#b0c8e4"></div>
<svg style="left:861px;top:308.0px" width="11" height="11" viewBox="0 0 11 11"><defs><linearGradient id="bl" x1="0.15" y1="0.15" x2="0.85" y2="0.85"><stop offset="0" stop-color="#ffffff"/><stop offset="0.3" stop-color="#f0f6ee"/><stop offset="0.5" stop-color="#b6d4b4"/><stop offset="0.72" stop-color="#4d93c4"/><stop offset="1" stop-color="#1c3e78"/></linearGradient></defs><circle cx="5.5" cy="5.5" r="4.6" fill="url(#bl)" stroke="#7fa8b8" stroke-width="0.8"/></svg>
<div class="t" style="left:883.30px;top:314.20px;font:bold 13px/0 'Liberation Sans', sans-serif;color:#0000ff;transform:scaleX(1.1379);transform-origin:0 0;">C = (-1.02, 1.62)</div>
<div class="r" style="left:846px;top:316px;width:1px;height:13.5px;background:#b0c8e4"></div>
<div class="r" style="left:846px;top:329.5px;width:10px;height:1px;background:#b0c8e4"></div>
<svg style="left:861px;top:324.0px" width="11" height="11" viewBox="0 0 11 11"><defs><linearGradient id="bl" x1="0.15" y1="0.15" x2="0.85" y2="0.85"><stop offset="0" stop-color="#ffffff"/><stop offset="0.3" stop-color="#f0f6ee"/><stop offset="0.5" stop-color="#b6d4b4"/><stop offset="0.72" stop-color="#4d93c4"/><stop offset="1" stop-color="#1c3e78"/></linearGradient></defs><circle cx="5.5" cy="5.5" r="4.6" fill="url(#bl)" stroke="#7fa8b8" stroke-width="0.8"/></svg>
<div class="t" style="left:883.30px;top:330.20px;font:13px/0 'Liberation Sans', sans-serif;color:#333;transform:scaleX(1.1210);transform-origin:0 0;">D = (0.36, 2.36)</div>
<div class="r" style="left:842px;top:340.0px;width:9px;height:9px;border:1px solid #bbb;border-radius:2px;background:linear-gradient(#fafafa,#d6d6d6)"></div>
<div class="r" style="left:844px;top:344.0px;width:5px;height:1.6px;background:#555"></div>
<div class="t" style="left:859.20px;top:344.80px;font:13px/0 'Liberation Sans', sans-serif;color:#111;transform:scaleX(1.0237);transform-origin:0 0;">Reta</div>
<div class="r" style="left:846px;top:347px;width:1px;height:19px;background:#b0c8e4"></div>
<div class="r" style="left:846px;top:360.5px;width:10px;height:1px;background:#b0c8e4"></div>
<svg style="left:861px;top:355.0px" width="11" height="11" viewBox="0 0 11 11"><defs><linearGradient id="bl" x1="0.15" y1="0.15" x2="0.85" y2="0.85"><stop offset="0" stop-color="#ffffff"/><stop offset="0.3" stop-color="#f0f6ee"/><stop offset="0.5" stop-color="#b6d4b4"/><stop offset="0.72" stop-color="#4d93c4"/><stop offset="1" stop-color="#1c3e78"/></linearGradient></defs><circle cx="5.5" cy="5.5" r="4.6" fill="url(#bl)" stroke="#7fa8b8" stroke-width="0.8"/></svg>
<div class="t" style="left:883.30px;top:361.20px;font:bold 13px/0 'Liberation Sans', sans-serif;color:#000;transform:scaleX(1.1279);transform-origin:0 0;">d: 1.46x - 1.68y = -3.44</div>
<div class="r" style="left:846px;top:363px;width:1px;height:19px;background:#b0c8e4"></div>
<div class="r" style="left:846px;top:376.5px;width:10px;height:1px;background:#b0c8e4"></div>
<svg style="left:861px;top:371.0px" width="11" height="11" viewBox="0 0 11 11"><defs><linearGradient id="bl" x1="0.15" y1="0.15" x2="0.85" y2="0.85"><stop offset="0" stop-color="#ffffff"/><stop offset="0.3" stop-color="#f0f6ee"/><stop offset="0.5" stop-color="#b6d4b4"/><stop offset="0.72" stop-color="#4d93c4"/><stop offset="1" stop-color="#1c3e78"/></linearGradient></defs><circle cx="5.5" cy="5.5" r="4.6" fill="url(#bl)" stroke="#7fa8b8" stroke-width="0.8"/></svg>
<div class="t" style="left:883.30px;top:377.20px;font:bold 13px/0 'Liberation Sans', sans-serif;color:#000;transform:scaleX(1.1392);transform-origin:0 0;">e: 2.94x + 0.62y = 2.52</div>
<div class="r" style="left:846px;top:379px;width:1px;height:13.5px;background:#b0c8e4"></div>
<div class="r" style="left:846px;top:392.5px;width:10px;height:1px;background:#b0c8e4"></div>
<svg style="left:861px;top:387.0px" width="11" height="11" viewBox="0 0 11 11"><defs><linearGradient id="bl" x1="0.15" y1="0.15" x2="0.85" y2="0.85"><stop offset="0" stop-color="#ffffff"/><stop offset="0.3" stop-color="#f0f6ee"/><stop offset="0.5" stop-color="#b6d4b4"/><stop offset="0.72" stop-color="#4d93c4"/><stop offset="1" stop-color="#1c3e78"/></linearGradient></defs><circle cx="5.5" cy="5.5" r="4.6" fill="url(#bl)" stroke="#7fa8b8" stroke-width="0.8"/></svg>
<div class="t" style="left:883.30px;top:393.20px;font:bold 13px/0 'Liberation Sans', sans-serif;color:#000;transform:scaleX(1.1334);transform-origin:0 0;">f: -1.48x - 2.3y = -5.96</div>
<div class="r" style="left:842px;top:403.0px;width:9px;height:9px;border:1px solid #bbb;border-radius:2px;background:linear-gradient(#fafafa,#d6d6d6)"></div>
<div class="r" style="left:844px;top:407.0px;width:5px;height:1.6px;background:#555"></div>
<div class="t" style="left:859.20px;top:407.80px;font:13px/0 'Liberation Sans', sans-serif;color:#111;transform:scaleX(1.0608);transform-origin:0 0;">Segmento de Reta</div>
<div class="r" style="left:846px;top:410px;width:1px;height:19px;background:#b0c8e4"></div>
<div class="r" style="left:846px;top:423.5px;width:10px;height:1px;background:#b0c8e4"></div>
<svg style="left:861px;top:418.0px" width="11" height="11" viewBox="0 0 11 11"><defs><linearGradient id="bl" x1="0.15" y1="0.15" x2="0.85" y2="0.85"><stop offset="0" stop-color="#ffffff"/><stop offset="0.3" stop-color="#f0f6ee"/><stop offset="0.5" stop-color="#b6d4b4"/><stop offset="0.72" stop-color="#4d93c4"/><stop offset="1" stop-color="#1c3e78"/></linearGradient></defs><circle cx="5.5" cy="5.5" r="4.6" fill="url(#bl)" stroke="#7fa8b8" stroke-width="0.8"/></svg>
<div class="t" style="left:883.30px;top:424.20px;font:bold 13px/0 'Liberation Sans', sans-serif;color:#000;transform:scaleX(1.1540);transform-origin:0 0;">a = 2.74</div>
<div class="r" style="left:846px;top:426px;width:1px;height:19px;background:#b0c8e4"></div>
<div class="r" style="left:846px;top:439.5px;width:10px;height:1px;background:#b0c8e4"></div>
<svg style="left:861px;top:434.0px" width="11" height="11" viewBox="0 0 11 11"><defs><linearGradient id="bl" x1="0.15" y1="0.15" x2="0.85" y2="0.85"><stop offset="0" stop-color="#ffffff"/><stop offset="0.3" stop-color="#f0f6ee"/><stop offset="0.5" stop-color="#b6d4b4"/><stop offset="0.72" stop-color="#4d93c4"/><stop offset="1" stop-color="#1c3e78"/></linearGradient></defs><circle cx="5.5" cy="5.5" r="4.6" fill="url(#bl)" stroke="#7fa8b8" stroke-width="0.8"/></svg>
<div class="t" style="left:883.30px;top:440.20px;font:bold 13px/0 'Liberation Sans', sans-serif;color:#000;transform:scaleX(1.1449);transform-origin:0 0;">b = 2.23</div>
<div class="r" style="left:846px;top:442px;width:1px;height:13.5px;background:#b0c8e4"></div>
<div class="r" style="left:846px;top:455.5px;width:10px;height:1px;background:#b0c8e4"></div>
<svg style="left:861px;top:450.0px" width="11" height="11" viewBox="0 0 11 11"><defs><linearGradient id="bl" x1="0.15" y1="0.15" x2="0.85" y2="0.85"><stop offset="0" stop-color="#ffffff"/><stop offset="0.3" stop-color="#f0f6ee"/><stop offset="0.5" stop-color="#b6d4b4"/><stop offset="0.72" stop-color="#4d93c4"/><stop offset="1" stop-color="#1c3e78"/></linearGradient></defs><circle cx="5.5" cy="5.5" r="4.6" fill="url(#bl)" stroke="#7fa8b8" stroke-width="0.8"/></svg>
<div class="t" style="left:883.30px;top:456.20px;font:bold 13px/0 'Liberation Sans', sans-serif;color:#000;transform:scaleX(1.1258);transform-origin:0 0;">c = 3</div>
<svg style="left:1037px;top:256px" width="9" height="395" viewBox="0 0 9 395"><defs><pattern id="sp836" x="0" y="0" width="8" height="4" patternUnits="userSpaceOnUse"><rect x="2" y="0" width="1" height="1" fill="#ffffff"/><rect x="3" y="1" width="1.2" height="1.2" fill="#6a7888"/><rect x="4" y="2" width="1" height="1" fill="#ffffff"/><rect x="5" y="3" width="1.2" height="1.2" fill="#6a7888"/></pattern></defs><rect x="0" y="0" width="8" height="395" fill="#eeeeee"/><rect x="0" y="2" width="8" height="390" fill="url(#sp836)"/><rect x="8" y="0" width="1" height="395" fill="#7a8aa0"/></svg>
<svg style="left:1046px;top:256px" width="611" height="395" viewBox="1046 256 611 395"><line x1="2959.2" y1="1538.7" x2="-400.6" y2="-631.9" stroke="#222" stroke-width="1.2"/><line x1="870.7" y1="-1504.4" x2="1687.9" y2="2411.2" stroke="#222" stroke-width="1.2"/><line x1="-230.3" y1="1765.3" x2="2788.9" y2="-858.5" stroke="#222" stroke-width="1.2"/><line x1="1357.3" y1="459.3" x2="1284.3" y2="375.3" stroke="#222" stroke-width="1.2"/><line x1="1284.3" y1="375.3" x2="1210.2" y2="490" stroke="#222" stroke-width="1.2"/><line x1="1210.2" y1="490" x2="1357.3" y2="459.3" stroke="#222" stroke-width="1.2"/><circle cx="1357.3" cy="459.3" r="3" fill="#0000ff" stroke="#000" stroke-width="0.9"/><circle cx="1284.3" cy="375.3" r="3" fill="#0000ff" stroke="#000" stroke-width="0.9"/><circle cx="1210.2" cy="490" r="3" fill="#0000ff" stroke="#000" stroke-width="0.9"/><circle cx="1279.3" cy="453.4" r="3" fill="#4a4a4a" stroke="#000" stroke-width="0.9"/><text x="1361" y="453" font-family="Liberation Sans" font-size="12" fill="#0000ff">A</text><text x="1288.6" y="368.8" font-family="Liberation Sans" font-size="12" fill="#0000ff">B</text><text x="1214.5" y="483.6" font-family="Liberation Sans" font-size="12" fill="#0000ff">C</text><text x="1283.3" y="446.8" font-family="Liberation Sans" font-size="12" fill="#444">D</text></svg>
<div class="r" style="left:837px;top:634px;width:198px;height:17px;background:#eeeeee;border-top:1px solid #a0a0a0"></div>
<div class="r" style="left:837px;top:635px;width:15px;height:16px;background:#eee;border-right:1px solid #c0c0c0"></div>
<svg style="left:837px;top:635px" width="15" height="16" viewBox="0 0 15 16"><polygon points="4,8.3 8,4.3 8,12.3" fill="#222"/></svg>
<div class="r" style="left:1019px;top:635px;width:15px;height:16px;background:#eee;border-left:1px solid #a0a0a0"></div>
<svg style="left:1019px;top:635px" width="15" height="16" viewBox="0 0 15 16"><polygon points="11,8.3 7,4.3 7,12.3" fill="#222"/></svg>
<div class="r" style="left:852px;top:634px;width:163px;height:17px;background:linear-gradient(#eef3fa 0%,#ffffff 20%,#dbe6f3 50%,#b8cbe6 100%);border:1px solid #6c8fd0;border-radius:1px"></div>
<div class="r" style="left:931.1px;top:638px;width:6px;height:9px;border-left:1px solid #5577cc;border-right:1px solid #5577cc"><div class="r" style="left:1.5px;top:0;width:1px;height:9px;background:#5577cc"></div></div>
<div class="r" style="left:836px;top:651px;width:822px;height:1px;background:#666"></div>
<div class="r" style="left:836px;top:652px;width:822px;height:29px;background:#eeeeee;border-left:1px solid #777;border-right:1px solid #777;border-bottom:1px solid #777"></div>
<div class="t" style="left:847.40px;top:666.50px;font:13px/0 'Liberation Sans', sans-serif;color:#222;transform:scaleX(1.0615);transform-origin:0 0;">Entrada:</div>
<div class="r" style="left:903px;top:654px;width:691px;height:23px;background:#fff;border:1px solid #8296a8;border-top-color:#7a8ea0;border-left-color:#8a9aa8"></div>
<svg style="left:1613px;top:659px" width="16" height="14" viewBox="0 0 16 14"><rect x="1" y="0.8" width="14" height="12.4" rx="2.2" fill="#f4f4f4" stroke="#666" stroke-width="1.6"/><polygon points="5.5,7 10,4 10,10" fill="#555"/></svg>
</body></html>
